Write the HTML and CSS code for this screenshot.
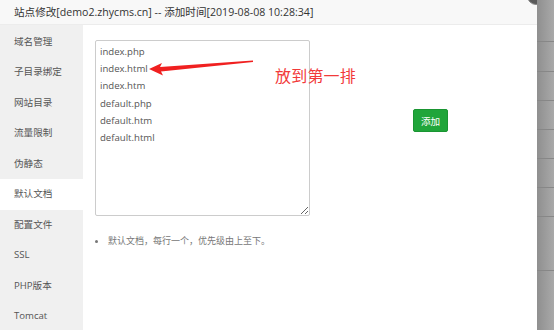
FILE: index.html
```html
<!DOCTYPE html>
<html lang="zh-CN">
<head>
<meta charset="utf-8">
<link rel="stylesheet" href="styles.css">
</head>
<body>
<div class="screen">
  <div class="dialog">
    <div class="title">站点修改[demo2.zhycms.cn] -- 添加时间[2019-08-08 10:28:34]</div>
    <div class="body">
      <ul class="nav">
        <li>域名管理</li>
        <li>子目录绑定</li>
        <li>网站目录</li>
        <li>流量限制</li>
        <li>伪静态</li>
        <li class="active">默认文档</li>
        <li>配置文件</li>
        <li>SSL</li>
        <li>PHP版本</li>
        <li>Tomcat</li>
      </ul>
      <div class="main">
        <div class="col">
          <textarea class="docs">index.php
index.html
index.htm
default.php
default.htm
default.html</textarea>
          <ul class="tips"><li>默认文档，每行一个，优先级由上至下。</li></ul>
        </div>
        <div class="side">
          <button class="btn">添加</button>
        </div>
        <svg class="arrow" width="106" height="20" viewBox="0 0 106 20">
          <polygon points="0,10 13,4 11,8 104,1.5 104,3 12,12.5 14,16.5" fill="#f02020"/>
        </svg>
        <div class="note">放到第一排</div>
      </div>
    </div>
    <span class="close"></span>
  </div>
  <div class="backdrop">
    <i style="top:41px"></i><i style="top:71px"></i><i style="top:100px"></i><i style="top:129px"></i><i style="top:158px"></i><i style="top:187px"></i><i style="top:216px"></i><i style="top:270px"></i>
  </div>
</div>
</body>
</html>
```
FILE: styles.css
```css
* { box-sizing: border-box; }
html, body { margin: 0; padding: 0; }
body {
  width: 554px; height: 330px; overflow: hidden;
  font-family: "Noto Sans CJK SC", "Open Sans", sans-serif;
  background: #fff;
}
.screen { display: flex; height: 330px; }
.dialog {
  position: relative;
  width: 537px; height: 330px;
  background: #fff;
  display: flex; flex-direction: column;
}
.title {
  height: 26px;
  background: #f8f8f8;
  border-bottom: 1px solid #ececec;
  padding-left: 14px;
  font-size: 10.6px;
  line-height: 24px;
  color: #333;
  white-space: nowrap;
  font-family: "Open Sans", "Noto Sans CJK SC", sans-serif;
}
.close {
  position: absolute;
  left: 527px; top: -13px;
  width: 18px; height: 18px;
  border-radius: 50%;
  background: #5a5a5a;
  border: 1px solid #888;
}
.body { flex: 1; display: flex; }
.nav {
  list-style: none; margin: 0; padding: 1.5px 0 0;
  width: 83px;
  background: #f0f0f0;
}
.nav li {
  height: 30.5px;
  line-height: 30.5px;
  padding-left: 14px;
  font-size: 9.6px;
  color: #555;
  font-family: "Open Sans", "Noto Sans CJK SC", sans-serif;
}
.nav li.active { background: #fff; }
.main {
  position: relative;
  flex: 1;
  display: flex;
  padding: 15px 0 0 12px;
}
.col { display: flex; flex-direction: column; }
.docs {
  width: 215px; height: 176px;
  border: 1px solid #ccc;
  border-radius: 2px;
  padding: 2px 4px 0;
  margin: 0;
  font-family: "Open Sans", "Noto Sans CJK SC", sans-serif;
  font-size: 9.6px;
  line-height: 17.2px;
  color: #555;
  resize: both;
  outline: none;
}
.tips {
  margin: 17px 0 0; padding: 0 0 0 13px;
  font-size: 9px;
  color: #777;
  line-height: 16px;
}
.tips li::marker { font-size: 9px; color: #777; }
.side { padding: 69px 0 0 103px; }
.btn {
  width: 35px; height: 23px;
  background: #20a53a;
  border: 1px solid #1a9532;
  border-radius: 2px;
  color: #fff;
  font-size: 9.6px;
  font-family: "Noto Sans CJK SC", sans-serif;
  padding: 0;
  display: block;
}
.arrow { position: absolute; left: 66px; top: 34px; }
.note {
  position: absolute;
  left: 192px; top: 38px;
  font-size: 16px;
  color: #f23a3a;
  letter-spacing: 0.2px;
}
.backdrop {
  position: relative;
  flex: 1;
  background: linear-gradient(to right, #8f8f8f, #a9a9a9);
}
.backdrop i {
  position: absolute; left: 0; right: 0;
  height: 1px;
  background: #878787;
}
```
